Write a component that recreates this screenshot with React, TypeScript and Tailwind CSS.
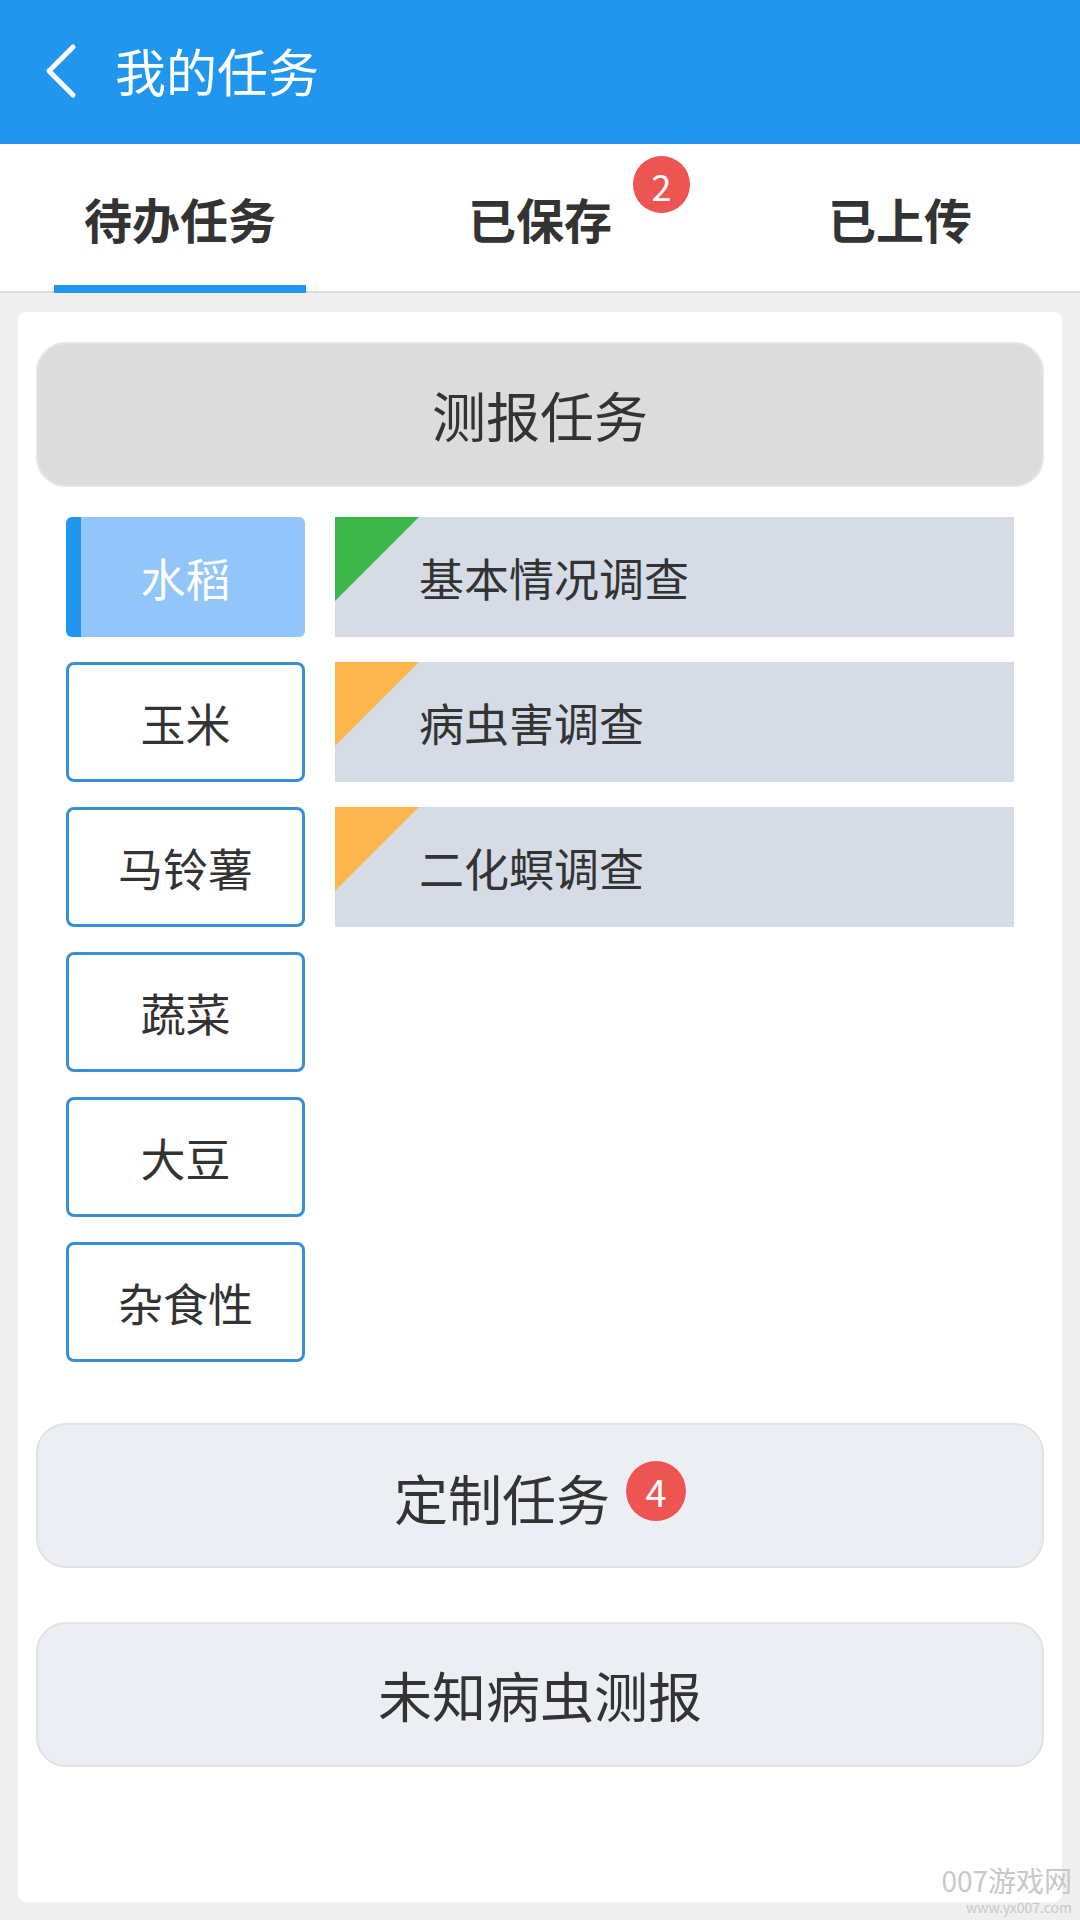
import React, { useState } from 'react';

const crops = ['水稻', '玉米', '马铃薯', '蔬菜', '大豆', '杂食性'];

const tasks = [
    { name: '基本情况调查', done: true },
    { name: '病虫害调查', done: false },
    { name: '二化螟调查', done: false },
];

const tabs = [
    { label: '待办任务', badge: 0 },
    { label: '已保存', badge: 2 },
    { label: '已上传', badge: 0 },
];

const App: React.FC = () => {
    const [tab, setTab] = useState(0);
    const [crop, setCrop] = useState(0);

    return (
        <div
            className="relative w-[1080px] h-[1920px] bg-[#efefef] flex flex-col overflow-hidden"
            style={{ fontFamily: '"Noto Sans CJK SC", "Noto Sans", sans-serif' }}
        >
            {/* header */}
            <div className="h-[144px] bg-[#2196ee] flex items-center shrink-0">
                <button className="w-[115px] h-full flex items-center justify-start pl-[44px] -mt-[2px]">
                    <svg width="34" height="56" viewBox="0 0 34 56" fill="none">
                        <path d="M29 4 L5 28 L29 52" stroke="white" strokeWidth="5" strokeLinecap="round" strokeLinejoin="round" />
                    </svg>
                </button>
                <h1 className="text-white text-[51px] leading-none font-normal -mt-[4px]">我的任务</h1>
            </div>

            {/* tabs */}
            <div className="h-[149px] bg-white border-b-2 border-[#dcdcdc] flex shrink-0">
                {tabs.map((t, i) => (
                    <button
                        key={t.label}
                        onClick={() => setTab(i)}
                        className="relative flex-1 flex items-center justify-center"
                    >
                        <span className="relative text-[48px] leading-none font-bold text-[#333] mt-[1px]">
                            {t.label}
                            {t.badge > 0 && (
                                <span className="absolute -right-[78px] -top-[38px] w-[57px] h-[57px] rounded-full bg-[#ec5552] text-white text-[36px] font-normal flex items-center justify-center">
                                    {t.badge}
                                </span>
                            )}
                        </span>
                        {tab === i && (
                            <span className="absolute left-[54px] right-[54px] -bottom-[2px] h-[8px] bg-[#2196ee]" />
                        )}
                    </button>
                ))}
            </div>

            {/* card */}
            <div className="mx-[18px] mt-[19px] h-[1590px] bg-white rounded-[8px] px-[18px] pt-[30px] flex flex-col">
                <button className="h-[145px] rounded-[30px] bg-[#dcdcdc] border-2 border-[#e5e5e5] flex items-center justify-center text-[54px] text-[#333] leading-none">
                    测报任务
                </button>

                <div className="mt-[30px] px-[30px] flex gap-[30px]">
                    <div className="w-[239px] flex flex-col gap-[25px]">
                        {crops.map((c, i) =>
                            crop === i ? (
                                <button
                                    key={c}
                                    onClick={() => setCrop(i)}
                                    className="h-[120px] rounded-[6px] bg-[#92c5f9] border-l-[15px] border-[#2196ee] flex items-center justify-center text-[45px] text-white leading-none pr-[15px]"
                                >
                                    {c}
                                </button>
                            ) : (
                                <button
                                    key={c}
                                    onClick={() => setCrop(i)}
                                    className="h-[120px] rounded-[8px] bg-white border-[3px] border-[#3a8ed3] flex items-center justify-center text-[45px] text-[#333] leading-none"
                                >
                                    {c}
                                </button>
                            )
                        )}
                    </div>

                    <div className="flex-1 flex flex-col gap-[25px]">
                        {tasks.map((t) => (
                            <div key={t.name} className="relative h-[120px] bg-[#d5dce6] flex items-center pl-[84px] text-[45px] text-[#333] leading-none">
                                <svg className="absolute left-0 top-0" width="84" height="84" viewBox="0 0 84 84">
                                    <polygon points="0,0 84,0 0,84" fill={t.done ? '#3cb54a' : '#fdb54e'} />
                                </svg>
                                {t.name}
                            </div>
                        ))}
                    </div>
                </div>

                <button className="mt-[61px] h-[145px] rounded-[30px] bg-[#ebeef3] border-2 border-[#e2e2e2] flex items-center justify-center gap-[16px]">
                    <span className="text-[54px] text-[#333] leading-none mt-[4px]">定制任务</span>
                    <span className="w-[60px] h-[60px] rounded-full bg-[#ec5552] text-white text-[38px] leading-none flex items-center justify-center -mt-[10px]">
                        4
                    </span>
                </button>

                <button className="mt-[54px] h-[145px] rounded-[30px] bg-[#ebeef3] border-2 border-[#e2e2e2] flex items-center justify-center text-[54px] text-[#333] leading-none">
                    未知病虫测报
                </button>
            </div>

            {/* watermark */}
            <div className="absolute right-[8px] bottom-[6px] flex flex-col items-end text-[#c8c8c8] leading-none pointer-events-none">
                <span className="text-[28px]">007游戏网</span>
                <span className="text-[14px] mt-[6px]">www.yx007.com</span>
            </div>
        </div>
    );
};

export default App;
